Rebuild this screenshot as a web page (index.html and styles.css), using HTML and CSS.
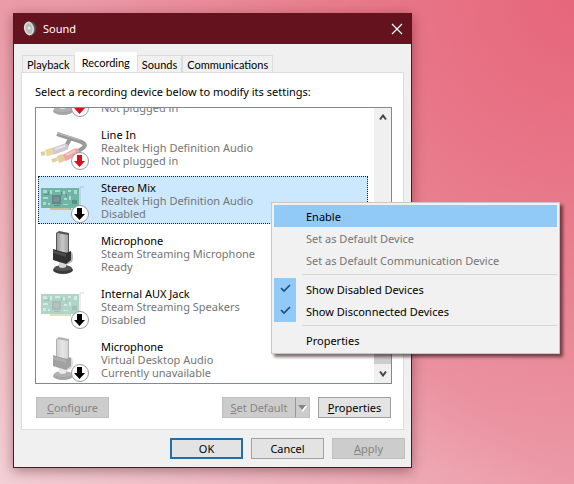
FILE: index.html
```html
<!DOCTYPE html>
<html lang="en">
<head>
<meta charset="utf-8">
<title>Sound</title>
<link rel="stylesheet" href="styles.css">
</head>
<body>
<svg class="defs" width="0" height="0" aria-hidden="true">
  <defs>
    <linearGradient id="metal" x1="0" x2="1"><stop offset="0" stop-color="#9a9a9a"/><stop offset=".5" stop-color="#c8c8c8"/><stop offset="1" stop-color="#a4a4a4"/></linearGradient>
    <symbol id="mic" viewBox="0 0 54 48">
      <ellipse cx="25" cy="41" rx="10" ry="4" fill="#3a3a3a"/>
      <ellipse cx="25" cy="39" rx="9" ry="3" fill="#555"/>
      <path d="M21 33h7v5q-3.500 2-7 0z" fill="#d5d5d5"/>
      <path d="M28 25l6-2q2 6 0 10l-6 3z" fill="#b5b5b5"/>
      <path d="M18 4l3-2 10 2v21l-4 1-9-3z" fill="#555"/>
      <path d="M19 4l11 2v18l-11-2z" fill="url(#metal)"/>
      <path d="M15 20l13 4 5-2v9l-5 4-13-4z" fill="#303030"/>
      <path d="M15 21l13 4v3l-13-4z" fill="#4d4d4d"/>
    </symbol>
    <symbol id="card" viewBox="0 0 54 48">
      <path d="M3 12h38v20h-8v2H12v-2H3z" fill="#4fa488"/>
      <path d="M12 32h20v2H12z" fill="#c9b678"/>
      <path d="M5 14h4v3H5zM12 14h2v4h-2zM17 14h5v2h-5zM25 15h2v3h-2zM30 14h3v2h-3zM36 14h3v4h-3zM5 21h5v2H5zM5 26h3v3H5zM26 22h3v2h-3zM31 20h2v4h-2zM25 28h5v1h-5zM10 27h2v2h-2z" fill="#a5d2c0"/>
      <path d="M10 16h1v3h-1zM23 16h1v3h-1zM28 18h1v3h-1zM6 18h4v1H6zM34 24h5v4h-5zM16 29h6v1h-6z" fill="#2f7660"/>
      <path d="M14 19h9v9h-9z" fill="#4a6560"/>
      <path d="M16 21h5v5h-5z" fill="#5f7773"/>
      <path d="M46 11h-4v21" fill="none" stroke="#a9b3b6"/>
    </symbol>
    <symbol id="cables" viewBox="0 0 54 48">
      <path d="M19 11l22 7q9 3 4 7t-9 3M32 16l-4 7" fill="none" stroke="#222" stroke-width="4"/>
      <path d="M19 10l23 7" fill="none" stroke="#777" stroke-width="1"/>
      <path d="M16 28l11-4" fill="none" stroke="#988a98" stroke-width="7" stroke-linecap="round"/>
      <path d="M17 26l10-3" fill="none" stroke="#cfc3cf" stroke-width="2"/>
      <path d="M3 31l4-1" fill="none" stroke="#b89438" stroke-width="4"/>
      <path d="M8 30l7-2" fill="none" stroke="#c9ab2c" stroke-width="7"/>
      <path d="M28 34l10-5" fill="none" stroke="#d2403a" stroke-width="7" stroke-linecap="round"/>
      <path d="M28 32l9-4" fill="none" stroke="#f08a80" stroke-width="2"/>
      <path d="M14 38l5-2" fill="none" stroke="#b89438" stroke-width="4"/>
      <path d="M20 37l6-3" fill="none" stroke="#c0942c" stroke-width="7"/>
    </symbol>
    <symbol id="badge" viewBox="0 0 54 48">
      <circle cx="42" cy="38" r="8.500" fill="#fff" stroke="#9a9a9a"/>
      <path d="M39 32h5v6h3l-5.500 6-5.500-6h3z" fill="currentColor"/>
    </symbol>
  </defs>
</svg>

<main class="window">
  <header class="titlebar">
    <svg class="app-icon" viewBox="0 0 14 16" aria-hidden="true"><path d="M6 1q6-1 7 5t-5 9z" fill="#555"/><ellipse cx="6" cy="7.500" rx="5" ry="7" fill="#ddd" transform="rotate(-12 6 7.500)"/><ellipse cx="6" cy="7.500" rx="3.500" ry="5.500" fill="#b9bcb9" transform="rotate(-12 6 7.500)"/><circle cx="6" cy="7" r="1.500" fill="#e8e8e8"/></svg>
    <h1>Sound</h1>
    <button class="close" aria-label="Close"><svg viewBox="0 0 12 12" aria-hidden="true"><path d="M1 1l10 10M11 1L1 11" fill="none" stroke="#fff" stroke-width="1.200"/></svg></button>
  </header>

  <div class="content">
    <div class="tabs" role="tablist">
      <button class="tab" role="tab">Playback</button>
      <button class="tab active" role="tab" aria-selected="true">Recording</button>
      <button class="tab" role="tab">Sounds</button>
      <button class="tab" role="tab">Communications</button>
    </div>

    <section class="panel">
      <p class="hint" id="hint">Select a recording device below to modify its settings:</p>
      <div class="listbox">
        <ul class="devices" aria-labelledby="hint">
          <li class="device">
            <svg class="icon" aria-hidden="true"><use href="#mic" class="dim"/><use href="#badge" class="red"/></svg>
            <div><span>Not plugged in</span></div>
          </li>
          <li class="device">
            <svg class="icon" aria-hidden="true"><use href="#cables" class="dim"/><use href="#badge" class="red"/></svg>
            <div><strong>Line In</strong><span>Realtek High Definition Audio</span><span>Not plugged in</span></div>
          </li>
          <li class="device selected">
            <svg class="icon" aria-hidden="true"><use href="#card" class="soft"/><use href="#badge"/></svg>
            <div><strong>Stereo Mix</strong><span>Realtek High Definition Audio</span><span>Disabled</span></div>
          </li>
          <li class="device">
            <svg class="icon" aria-hidden="true"><use href="#mic"/></svg>
            <div><strong>Microphone</strong><span>Steam Streaming Microphone</span><span>Ready</span></div>
          </li>
          <li class="device">
            <svg class="icon" aria-hidden="true"><use href="#card" class="dim"/><use href="#badge"/></svg>
            <div><strong>Internal AUX Jack</strong><span>Steam Streaming Speakers</span><span>Disabled</span></div>
          </li>
          <li class="device">
            <svg class="icon" aria-hidden="true"><use href="#mic" class="dim"/><use href="#badge"/></svg>
            <div><strong>Microphone</strong><span>Virtual Desktop Audio</span><span>Currently unavailable</span></div>
          </li>
        </ul>
        <div class="scrollbar">
          <button aria-label="Scroll up"><svg viewBox="0 0 8 7" aria-hidden="true"><path d="M1 5.500l3-4 3 4" fill="none" stroke="#444" stroke-width="2"/></svg></button>
          <div class="thumb"></div>
          <button aria-label="Scroll down"><svg viewBox="0 0 8 7" aria-hidden="true"><path d="M1 1.500l3 4 3-4" fill="none" stroke="#444" stroke-width="2"/></svg></button>
        </div>
      </div>
      <div class="actions">
        <button class="btn" disabled><u>C</u>onfigure</button>
        <div class="split">
          <button class="btn" disabled><u>S</u>et Default</button>
          <button class="btn arrow" disabled aria-label="More defaults"><svg viewBox="0 0 9 7" aria-hidden="true"><path d="M1 1h8l-4 6z" fill="#fff"/><path d="M0 0h8L4 5z" fill="#858585"/></svg></button>
        </div>
        <button class="btn"><u>P</u>roperties</button>
      </div>
    </section>

    <footer class="footer">
      <button class="btn default">OK</button>
      <button class="btn">Cancel</button>
      <button class="btn" disabled><u>A</u>pply</button>
    </footer>
  </div>
</main>

<div class="menu" role="menu">
  <button class="item hot" role="menuitem">Enable</button>
  <button class="item" role="menuitem" disabled>Set as Default Device</button>
  <button class="item" role="menuitem" disabled>Set as Default Communication Device</button>
  <hr>
  <button class="item checked" role="menuitemcheckbox" aria-checked="true"><svg viewBox="0 0 22 22" aria-hidden="true"><path d="M7 10l3 3 6-6" fill="none" stroke="#1d4f80" stroke-width="1.700"/></svg>Show Disabled Devices</button>
  <button class="item checked" role="menuitemcheckbox" aria-checked="true"><svg viewBox="0 0 22 22" aria-hidden="true"><path d="M7 10l3 3 6-6" fill="none" stroke="#1d4f80" stroke-width="1.700"/></svg>Show Disconnected Devices</button>
  <hr>
  <button class="item" role="menuitem">Properties</button>
</div>
</body>
</html>
```
FILE: styles.css
```css
* { box-sizing: border-box; }

body {
  margin: 0;
  min-height: 100vh;
  padding: 13px 162px 16px 13px;
  background:
    radial-gradient(circle at 100% 0, #e6667a 0, rgba(230, 102, 122, 0) 65%),
    linear-gradient(to top right, #f3d0d6, #eb9aa7 50%, #ea8f9d);
  font: 11px/13px "Noto Sans", "Open Sans", sans-serif;
  color: #000;
}

button {
  margin: 0;
  padding: 0;
  border: 0;
  background: none;
  font: inherit;
  color: inherit;
}

.defs { position: absolute; }

.window {
  border: 1px solid #571420;
  border-top: 0;
  background: #f0f0f0;
  box-shadow: 0 3px 12px rgba(60, 0, 15, .4);
}

.titlebar {
  display: flex;
  align-items: center;
  gap: 6px;
  height: 31px;
  padding: 0 8px 0 9px;
  background: #64121e;
  color: #fff;
}

.app-icon { width: 14px; height: 16px; }

h1 {
  flex: 1;
  margin: 0;
  font-size: 11px;
  font-weight: 400;
}

.close { width: 12px; height: 12px; }
.close svg { display: block; }

.content { padding: 8px 6px 8px 7px; }

.tabs {
  display: flex;
  align-items: flex-end;
  padding-left: 1px;
  font-family: Lato, "Open Sans", sans-serif;
}

.tab {
  height: 17px;
  padding: 0 4px;
  border: 1px solid #dcdcdc;
  border-bottom: 0;
}

.tab.active {
  height: 20px;
  padding: 0 6px;
  border-color: #fff;
  background: #fff;
}

.panel {
  margin-right: 1px;
  padding: 12px 11px 11px 13px;
  border: 1px solid #dcdcdc;
  background: #fff;
}

.hint { margin: 0 0 9px; }

.listbox {
  display: flex;
  height: 277px;
  border: 1px solid #828790;
}

.devices {
  display: flex;
  flex: 1;
  flex-direction: column;
  justify-content: flex-end;
  gap: 5px;
  margin: 0;
  padding: 0 6px 0 2px;
  overflow: hidden;
  list-style: none;
}

.device {
  display: flex;
  flex: none;
  gap: 9px;
  height: 48px;
  border: 1px solid transparent;
}

.device div {
  display: flex;
  flex-direction: column;
  justify-content: flex-end;
  padding-bottom: 3px;
}

.device strong { font-weight: 400; }
.device span { color: #757575; }

.selected {
  border: 1px dotted #123;
  background: #cce8ff;
}

.icon {
  width: 54px;
  height: 48px;
  margin: -1px 0 -1px -1px;
}

.dim { opacity: .45; }
.soft { opacity: .75; }
.red { color: #d8101c; }

.scrollbar {
  display: flex;
  flex-direction: column;
  justify-content: space-between;
  width: 17px;
  background: #f0f0f0;
}

.scrollbar button {
  display: grid;
  place-items: center;
  height: 19px;
}

.scrollbar svg { width: 8px; height: 7px; }

.thumb {
  height: 80px;
  margin-top: auto;
  background: #cdcdcd;
}

.actions,
.footer {
  display: flex;
  gap: 8px;
}

.actions { padding: 13px 1px 0; }
.actions > :first-child { margin-right: auto; }

.footer {
  justify-content: flex-end;
  padding-top: 8px;
}

.btn {
  width: 73px;
  height: 21px;
  border: 1px solid #a0a0a0;
  background: #e3e3e3;
}

.btn:disabled {
  border-color: #bfbfbf;
  background: #ccc;
  color: #858585;
}

.btn.default { border: 2px solid #1f6fae; }

.split { display: flex; }
.split .btn { border-right: 0; }
.split .arrow {
  width: 15px;
  border-right: 1px solid #bfbfbf;
  border-left: 1px solid #999;
}
.arrow svg { width: 9px; height: 7px; }

.menu {
  position: absolute;
  top: 202px;
  left: 271px;
  display: flex;
  flex-direction: column;
  width: 289px;
  padding: 2px;
  border: 1px solid #c8c8c8;
  background: #f1f1f1;
  box-shadow: 3px 3px 3px rgba(40, 10, 15, .6);
}

.item {
  display: flex;
  align-items: center;
  height: 22px;
  padding-left: 32px;
  text-align: left;
}

.item:disabled { color: #757575; }
.hot { background: #91c9f7; }

.checked { gap: 10px; padding-left: 0; }
.checked svg {
  width: 22px;
  height: 22px;
  background: #91c9f7;
}

hr {
  width: calc(100% - 28px);
  height: 1px;
  margin: 3px 0 3px auto;
  border: 0;
  background: #d7d7d7;
}
```
